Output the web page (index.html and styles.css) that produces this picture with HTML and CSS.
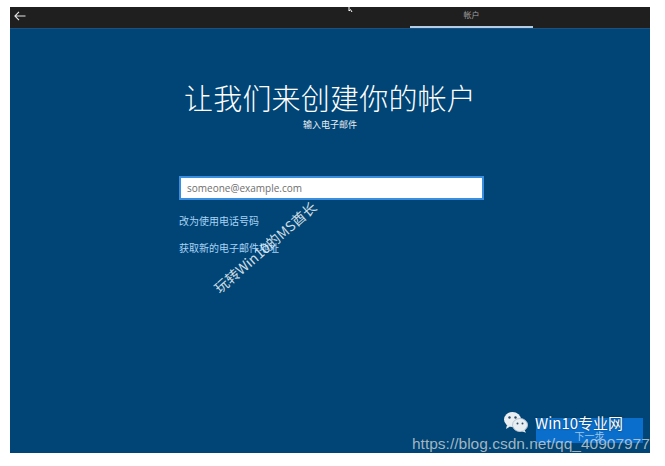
FILE: index.html
```html
<!DOCTYPE html>
<html lang="zh-CN">
<head>
    <meta charset="UTF-8">
    <title>帐户</title>
    <link rel="stylesheet" href="styles.css">
</head>
<body>
    <div class="screen">
        <div class="topbar">
            <span class="back">
                <svg width="12" height="10" viewBox="0 0 12 10"><path d="M11.5 5H1M5 0.8L0.9 5 5 9.2" fill="none" stroke="#e6e6e6" stroke-width="1.1"/></svg>
            </span>
            <span class="cursor">
                <svg width="6" height="6" viewBox="0 0 6 6"><path d="M1 0L1 5 2.5 3.6 4 6" fill="none" stroke="#fff" stroke-width="1"/></svg>
            </span>
            <div class="tab">帐户</div>
        </div>

        <div class="main">
            <h1 class="title">让我们来创建你的帐户</h1>
            <p class="subtitle">输入电子邮件</p>

            <div class="form">
                <div class="input">someone@example.com</div>
                <a class="link" href="#">改为使用电话号码</a>
                <a class="link" href="#">获取新的电子邮件地址</a>
            </div>
        </div>

        <div class="footer">
            <button class="next-button">下一步</button>
        </div>

        <div class="watermark">玩转Win10的MS酋长</div>
    </div>

    <div class="brand">
        <svg width="26" height="22" viewBox="0 0 26 22">
            <ellipse cx="9.5" cy="8.5" rx="8.5" ry="7.5" fill="#e9eef3"/>
            <path d="M4 14l-1 4 4-2.5z" fill="#e9eef3"/>
            <ellipse cx="17" cy="14" rx="7.5" ry="6.5" fill="#e9eef3" stroke="#b9c6d2" stroke-width="1"/>
            <path d="M21.5 19l1.5 2.8-4-1.6z" fill="#e9eef3"/>
            <circle cx="6.5" cy="6.5" r="1.2" fill="#2a4a66"/>
            <circle cx="12.5" cy="6.5" r="1.2" fill="#2a4a66"/>
            <circle cx="14.5" cy="12.5" r="1" fill="#2a4a66"/>
            <circle cx="19.5" cy="12.5" r="1" fill="#2a4a66"/>
        </svg>
        <span>Win10专业网</span>
    </div>
    <div class="url">https://blog.csdn.net/qq_40907977</div>
</body>
</html>
```

FILE: styles.css
```css
/* Page */
body {
    margin: 0;
    background: #ffffff;
    font-family: "Noto Sans CJK SC", "Noto Sans", sans-serif;
    position: relative;
    width: 665px;
    height: 466px;
    overflow: hidden;
}

.screen {
    position: relative;
    margin: 7px 0 0 10px;
    width: 640px;
    height: 446px;
    background: #004575;
    display: flex;
    flex-direction: column;
    overflow: hidden;
}

/* Top bar */
.topbar {
    position: relative;
    height: 21px;
    background: #1f1f1f;
    display: flex;
    align-items: center;
    border-bottom: 1px solid #1a5180;
}

.back {
    display: flex;
    margin-left: 4px;
    margin-top: -4px;
}

.cursor {
    position: absolute;
    left: 338px;
    top: -1px;
    display: flex;
}

.tab {
    margin-left: auto;
    margin-right: 117px;
    width: 123px;
    height: 21px;
    box-sizing: border-box;
    border-bottom: 2px solid #b3cde6;
    color: #a0a0a0;
    font-size: 8px;
    line-height: 15px;
    text-align: center;
}

/* Main content */
.main {
    flex: 1;
    display: flex;
    flex-direction: column;
    align-items: center;
}

.title {
    margin: 50px 0 0;
    font-size: 29px;
    font-weight: 300;
    line-height: 36px;
    color: #ffffff;
    letter-spacing: 0.2px;
}

.subtitle {
    margin: 3px 0 0;
    font-size: 9px;
    line-height: 14px;
    color: #e8eef4;
}

.form {
    width: 305px;
    margin: 44px 0 0 3px;
    display: flex;
    flex-direction: column;
}

.input {
    height: 24px;
    box-sizing: border-box;
    border: 2px solid #3a8ee0;
    background: #ffffff;
    color: #6e6e6e;
    font-family: "Open Sans", "Noto Sans", sans-serif;
    font-size: 10px;
    line-height: 20px;
    padding-left: 6px;
}

.link {
    color: #a9d3f5;
    font-size: 10px;
    line-height: 14px;
    text-decoration: none;
    margin-top: 14px;
}

.link + .link {
    margin-top: 13px;
}

/* Footer */
.footer {
    display: flex;
    justify-content: flex-end;
    padding: 0 7px 10px 0;
}

.next-button {
    width: 107px;
    height: 25px;
    border: none;
    background: #0a6fcc;
    color: #9fc6ea;
    font-family: "Noto Sans CJK SC", sans-serif;
    font-size: 10px;
    padding-top: 10px;
}

/* Watermarks */
.watermark {
    position: absolute;
    left: 190px;
    top: 230px;
    transform: rotate(-41deg);
    transform-origin: center;
    color: rgba(255, 255, 255, 0.82);
    font-size: 14px;
    white-space: nowrap;
}

.brand {
    position: absolute;
    left: 503px;
    top: 411px;
    display: flex;
    align-items: center;
    gap: 6px;
    color: #ffffff;
    font-size: 15px;
    text-shadow: 0 0 2px rgba(0, 0, 0, 0.6);
}

.url {
    position: absolute;
    left: 412px;
    top: 435px;
    font-family: "Liberation Sans", Arial, sans-serif;
    font-size: 15.5px;
    color: rgba(220, 220, 220, 0.75);
    white-space: nowrap;
}
```
